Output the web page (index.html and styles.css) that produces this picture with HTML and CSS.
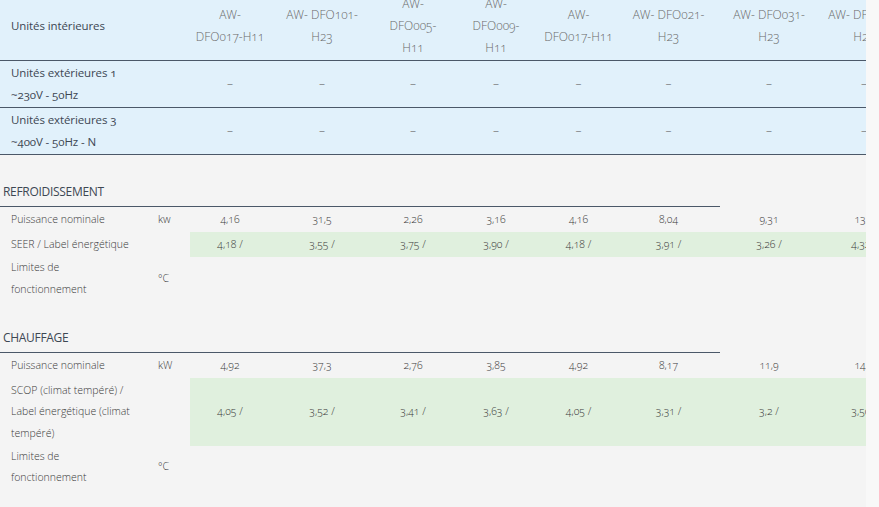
FILE: index.html
```html
<!DOCTYPE html>
<html lang="fr">
<head>
<meta charset="utf-8">
<title>Fiche technique</title>
<link rel="stylesheet" href="styles.css">
</head>
<body>
<div class="scroller">
  <table class="spec">
    <colgroup>
      <col class="c-label"><col class="c-unit">
      <col class="c-v1"><col class="c-v2"><col class="c-v3"><col class="c-v4">
      <col class="c-v5"><col class="c-v6"><col class="c-v7"><col class="c-v8">
    </colgroup>
    <tbody class="units">
      <tr class="head">
        <th colspan="2" class="lbl">Unités intérieures</th>
        <th>AW-<br>DFO017-H11</th>
        <th>AW- DFO101-<br>H23</th>
        <th>AW-<br>DFO005-<br>H11</th>
        <th>AW-<br>DFO009-<br>H11</th>
        <th>AW-<br>DFO017-H11</th>
        <th>AW- DFO021-<br>H23</th>
        <th>AW- DFO031-<br>H23</th>
        <th>AW- DFO041-<br>H23</th>
      </tr>
      <tr class="outdoor">
        <th colspan="2" class="lbl">Unités extérieures 1<br>~230V - 50Hz</th>
        <td>–</td><td>–</td><td>–</td><td>–</td><td>–</td><td>–</td><td>–</td><td>–</td>
      </tr>
      <tr class="outdoor">
        <th colspan="2" class="lbl">Unités extérieures 3<br>~400V - 50Hz - N</th>
        <td>–</td><td>–</td><td>–</td><td>–</td><td>–</td><td>–</td><td>–</td><td>–</td>
      </tr>
    </tbody>
    <tbody class="section">
      <tr class="sec-head">
        <th colspan="8">REFROIDISSEMENT</th><th></th><th></th>
      </tr>
      <tr>
        <th class="name">Puissance nominale</th><td class="unit">kw</td>
        <td>4,16</td><td>31,5</td><td>2,26</td><td>3,16</td><td>4,16</td><td>8,04</td><td>9,31</td><td>13,1</td>
      </tr>
      <tr class="hl">
        <th class="name">SEER / Label énergétique</th><td class="unit"></td>
        <td>4,18 /</td><td>3,55 /</td><td>3,75 /</td><td>3,90 /</td><td>4,18 /</td><td>3,91 /</td><td>3,26 /</td><td>4,32 /</td>
      </tr>
      <tr>
        <th class="name">Limites de<br>fonctionnement</th><td class="unit">°C</td>
        <td></td><td></td><td></td><td></td><td></td><td></td><td></td><td></td>
      </tr>
    </tbody>
    <tbody class="section">
      <tr class="sec-head sec-head--next">
        <th colspan="8">CHAUFFAGE</th><th></th><th></th>
      </tr>
      <tr>
        <th class="name">Puissance nominale</th><td class="unit">kW</td>
        <td>4,92</td><td>37,3</td><td>2,76</td><td>3,85</td><td>4,92</td><td>8,17</td><td>11,9</td><td>14,5</td>
      </tr>
      <tr class="hl tall">
        <th class="name">SCOP (climat tempéré) /<br>Label énergétique (climat<br>tempéré)</th><td class="unit"></td>
        <td>4,05 /</td><td>3,52 /</td><td>3,41 /</td><td>3,63 /</td><td>4,05 /</td><td>3,31 /</td><td>3,2 /</td><td>3,50 /</td>
      </tr>
      <tr>
        <th class="name">Limites de<br>fonctionnement</th><td class="unit">°C</td>
        <td></td><td></td><td></td><td></td><td></td><td></td><td></td><td></td>
      </tr>
    </tbody>
  </table>
</div>
</body>
</html>
```

FILE: styles.css
```css
html, body {
  margin: 0;
  padding: 0;
}
body {
  background: #f8f8f8;
  font-family: "Open Sans", "Lato", sans-serif;
  color: #3b3b3b;
  overflow: hidden;
}
.scroller {
  width: 866px;
  overflow: hidden;
  background: #f4f4f4;
  margin-top: -8px;
  height: 515px;
}
.spec {
  table-layout: fixed;
  width: 908px;
  border-collapse: separate;
  border-spacing: 0;
  font-variant-numeric: oldstyle-nums;
}
.c-label { width: 148px; }
.c-unit { width: 42px; }
.c-v1 { width: 80px; }
.c-v2 { width: 104px; }
.c-v3 { width: 78px; }
.c-v4 { width: 88px; }
.c-v5 { width: 77px; }
.c-v6 { width: 103px; }
.c-v7 { width: 98px; }
.c-v8 { width: 92px; }

.spec th, .spec td {
  padding: 0;
  vertical-align: middle;
  white-space: nowrap;
}

/* top block */
.units th, .units td {
  background: #e1f1fb;
  border-bottom: 1px solid #4b5868;
  text-align: center;
  font-size: 12px;
  line-height: 22px;
}
.units .head th {
  height: 68px;
  font-weight: 300;
  color: #6a6a6a;
}
.units .outdoor th, .units .outdoor td {
  height: 46px;
}
.units td {
  font-weight: 300;
  color: #666;
}
.units th.lbl,
.units .head th.lbl {
  text-align: left;
  padding-left: 11px;
  font-weight: 500;
  color: #3d4753;
  font-size: 11.5px;
  letter-spacing: -0.1px;
}

/* sections */
.sec-head th {
  text-align: left;
  font-size: 12px;
  line-height: 18px;
  font-weight: 500;
  color: #3d4753;
  padding: 28px 0 5px 3px;
  letter-spacing: -0.3px;
}
.sec-head th[colspan] {
  border-bottom: 1px solid #4b5868;
}
.sec-head--next th {
  padding-top: 29px;
}
.section th.name {
  text-align: left;
  padding-left: 11px;
  font-weight: 300;
  font-size: 10.5px;
  line-height: 21.5px;
  color: #3b3b3b;
}
.section td {
  height: 25px;
  text-align: center;
  font-weight: 300;
  font-size: 10.5px;
  line-height: 21.5px;
  color: #3b3b3b;
}
.section td.unit {
  text-align: left;
  padding-left: 10px;
}
.section tr.hl td:not(.unit) {
  background: #e0f0de;
}
.section tr.tall td, .section tr.tall th {
  padding-top: 1.5px;
  padding-bottom: 1.5px;
}
```
